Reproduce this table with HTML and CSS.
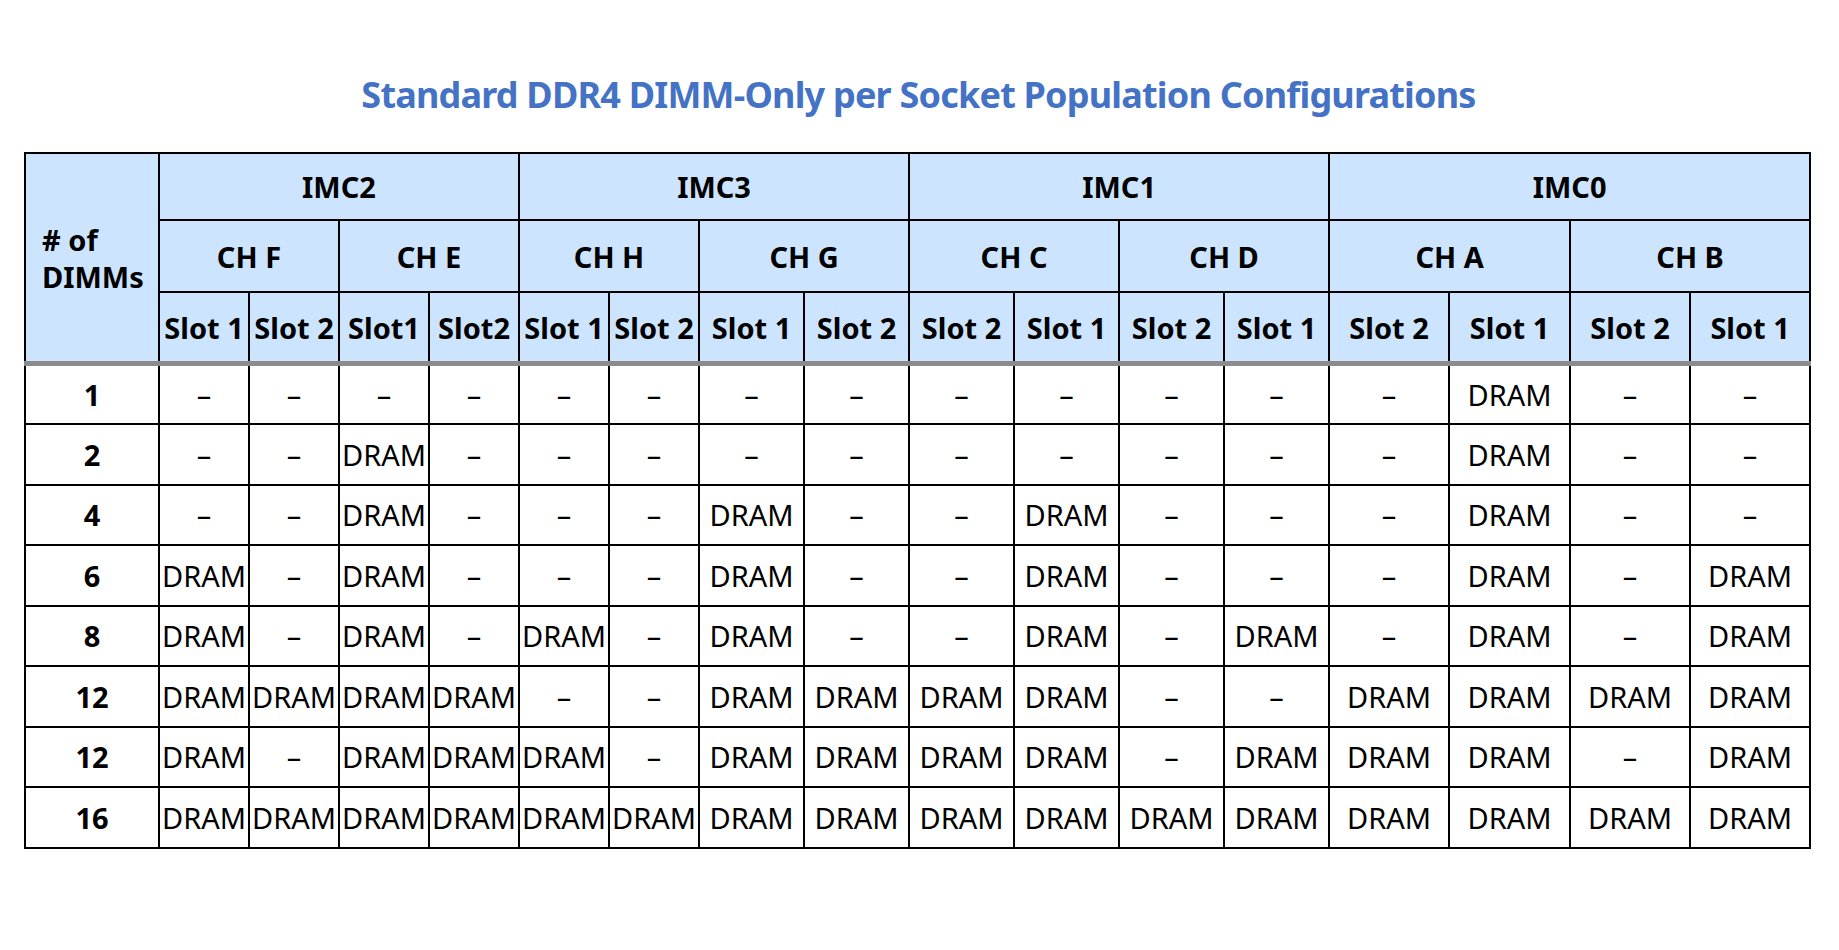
FILE: index.html
```html
<!DOCTYPE html>
<html lang="en">
<head>
<meta charset="utf-8">
<title>Standard DDR4 DIMM-Only per Socket Population Configurations</title>
<link rel="stylesheet" href="styles.css">
</head>
<body>
<main class="page">
  <h1 class="title">Standard DDR4 DIMM-Only per Socket Population Configurations</h1>
  <table class="config">
    <colgroup>
      <col class="c-first">
      <col class="c-n"><col class="c-n"><col class="c-n"><col class="c-n"><col class="c-n"><col class="c-n">
      <col class="c-m"><col class="c-m"><col class="c-m"><col class="c-m"><col class="c-m"><col class="c-m">
      <col class="c-w"><col class="c-w2"><col class="c-w"><col class="c-w">
    </colgroup>
    <thead>
      <tr class="r-imc">
        <th rowspan="3" class="dimms">
          <span class="dimms-label"># of DIMMs</span>
        </th>
        <th colspan="4">IMC2</th>
        <th colspan="4">IMC3</th>
        <th colspan="4">IMC1</th>
        <th colspan="4">IMC0</th>
      </tr>
      <tr class="r-ch">
        <th colspan="2">CH F</th>
        <th colspan="2">CH E</th>
        <th colspan="2">CH H</th>
        <th colspan="2">CH G</th>
        <th colspan="2">CH C</th>
        <th colspan="2">CH D</th>
        <th colspan="2">CH A</th>
        <th colspan="2">CH B</th>
      </tr>
      <tr class="r-slot">
        <th>Slot 1</th><th>Slot 2</th><th>Slot1</th><th>Slot2</th>
        <th>Slot 1</th><th>Slot 2</th><th>Slot 1</th><th>Slot 2</th>
        <th>Slot 2</th><th>Slot 1</th><th>Slot 2</th><th>Slot 1</th>
        <th>Slot 2</th><th>Slot 1</th><th>Slot 2</th><th>Slot 1</th>
      </tr>
    </thead>
    <tbody>
      <tr>
        <th>1</th>
        <td>–</td><td>–</td><td>–</td><td>–</td><td>–</td><td>–</td><td>–</td><td>–</td>
        <td>–</td><td>–</td><td>–</td><td>–</td><td>–</td><td>DRAM</td><td>–</td><td>–</td>
      </tr>
      <tr>
        <th>2</th>
        <td>–</td><td>–</td><td>DRAM</td><td>–</td><td>–</td><td>–</td><td>–</td><td>–</td>
        <td>–</td><td>–</td><td>–</td><td>–</td><td>–</td><td>DRAM</td><td>–</td><td>–</td>
      </tr>
      <tr class="bold-dash">
        <th>4</th>
        <td>–</td><td>–</td><td>DRAM</td><td>–</td><td>–</td><td>–</td><td>DRAM</td><td>–</td>
        <td>–</td><td>DRAM</td><td>–</td><td>–</td><td>–</td><td>DRAM</td><td>–</td><td>–</td>
      </tr>
      <tr>
        <th>6</th>
        <td>DRAM</td><td>–</td><td>DRAM</td><td>–</td><td>–</td><td>–</td><td>DRAM</td><td>–</td>
        <td>–</td><td>DRAM</td><td>–</td><td>–</td><td>–</td><td>DRAM</td><td>–</td><td>DRAM</td>
      </tr>
      <tr>
        <th>8</th>
        <td>DRAM</td><td>–</td><td>DRAM</td><td>–</td><td>DRAM</td><td>–</td><td>DRAM</td><td>–</td>
        <td>–</td><td>DRAM</td><td>–</td><td>DRAM</td><td>–</td><td>DRAM</td><td>–</td><td>DRAM</td>
      </tr>
      <tr>
        <th>12</th>
        <td>DRAM</td><td>DRAM</td><td>DRAM</td><td>DRAM</td><td>–</td><td>–</td><td>DRAM</td><td>DRAM</td>
        <td>DRAM</td><td>DRAM</td><td>–</td><td>–</td><td>DRAM</td><td>DRAM</td><td>DRAM</td><td>DRAM</td>
      </tr>
      <tr>
        <th>12</th>
        <td>DRAM</td><td>–</td><td>DRAM</td><td>DRAM</td><td>DRAM</td><td>–</td><td>DRAM</td><td>DRAM</td>
        <td>DRAM</td><td>DRAM</td><td>–</td><td>DRAM</td><td>DRAM</td><td>DRAM</td><td>–</td><td>DRAM</td>
      </tr>
      <tr>
        <th>16</th>
        <td>DRAM</td><td>DRAM</td><td>DRAM</td><td>DRAM</td><td>DRAM</td><td>DRAM</td><td>DRAM</td><td>DRAM</td>
        <td>DRAM</td><td>DRAM</td><td>DRAM</td><td>DRAM</td><td>DRAM</td><td>DRAM</td><td>DRAM</td><td>DRAM</td>
      </tr>
    </tbody>
  </table>
</main>
</body>
</html>
```

FILE: styles.css
```css
html, body {
  margin: 0;
  padding: 0;
  background: #ffffff;
}

.page {
  width: 1839px;
  padding: 70px 0 0 24px;
  box-sizing: border-box;
  font-family: "Noto Sans", "Open Sans", "Liberation Sans", sans-serif;
  color: #000000;
}

.title {
  margin: 0 0 32px 0;
  width: 1789px;
  text-align: center;
  font-size: 36px;
  line-height: 50px;
  font-weight: 700;
  color: #4472c4;
  letter-spacing: -0.8px;
}

.config {
  border-collapse: collapse;
  table-layout: fixed;
  width: 1787px;
  border: 2px solid #000000;
  font-size: 29px;
}

.c-first { width: 134px; }
.c-n { width: 90px; }
.c-m { width: 105px; }
.c-w { width: 120px; }
.c-w2 { width: 121px; }

.config th,
.config td {
  border: 2px solid #000000;
  padding: 0;
  text-align: center;
  vertical-align: middle;
  white-space: nowrap;
  overflow: hidden;
}

.config thead th {
  background: #cce4fd;
  font-weight: 700;
}

.config thead .r-imc th {
  height: 65px;
  border-bottom-width: 1px;
}

.config thead .r-ch th {
  height: 70px;
}

.config thead .r-slot th {
  height: 68px;
  border-bottom: 5px solid #8c8c8c;
}

.config thead th.dimms {
  text-align: left;
  padding-left: 16px;
  white-space: normal;
  line-height: 37px;
  border-bottom: 5px solid #8c8c8c;
}

.dimms-label {
  display: block;
  width: 100px;
}

.config tbody tr {
  height: 60.5px;
}

.config tbody th {
  font-weight: 700;
}

.config tbody td {
  font-weight: 400;
}

.bold-dash td {
  font-weight: 700;
}
```
